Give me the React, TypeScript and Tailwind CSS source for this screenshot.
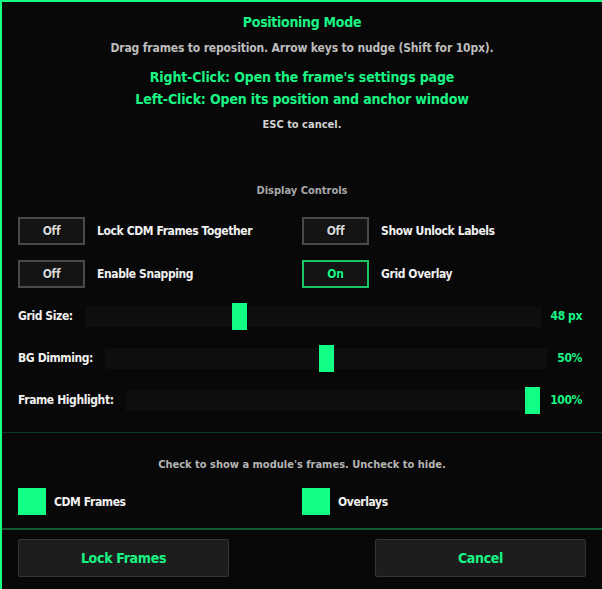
import { FC } from "react";

const green = "text-[#19f584]";

interface ToggleProps {
  label: string;
  on: boolean;
}

const Toggle: FC<ToggleProps> = ({ label, on }) => {
  return (
    <div className="flex items-center gap-[12px]">
      <div
        className={`w-[67px] h-[28px] flex items-center justify-center bg-[#141414] border-2 text-[12px] tracking-[-0.3px] [text-shadow:1px_1px_0_#000] ${
          on ? "border-[#19c865] text-[#19f584]" : "border-[#4a4a4a] text-[#d6d6d6]"
        }`}
      >
        {on ? "On" : "Off"}
      </div>
      <div className="text-[12px] tracking-[-0.4px] text-[#f0f0f0]">{label}</div>
    </div>
  );
};

interface SliderProps {
  label: string;
  value: string;
  pct: number;
}

const Slider: FC<SliderProps> = ({ label, value, pct }) => {
  return (
    <div className="flex items-center h-[28px] pl-[16px] pr-[20px]">
      <div className="text-[12px] tracking-[-0.4px] text-[#f0f0f0] mr-[12px]">{label}</div>
      <div className="relative flex-1 h-[21px] bg-[#0e0e0e]">
        <div
          className="absolute top-[-3px] w-[15px] h-[27px] bg-[#12ff85]"
          style={{ left: `calc(${pct}% - ${(pct / 100) * 15}px)` }}
        />
      </div>
      <div className={`text-[12px] tracking-[-0.4px] ${green} ml-[10px] min-w-[25px] text-right`}>
        {value}
      </div>
    </div>
  );
};

const Check: FC<{ label: string }> = ({ label }) => {
  return (
    <div className="flex items-center gap-[8px]">
      <div className="w-[28px] h-[27px] bg-[#12ff85]" />
      <div className="text-[12px] tracking-[-0.4px] text-[#f0f0f0]">{label}</div>
    </div>
  );
};

const App: FC = () => {
  return (
    <div
      className="w-[602px] h-[589px] overflow-hidden bg-[#080808] border-l-2 border-t-2 border-[#14ff82] font-bold"
      style={{ fontFamily: '"DejaVu Sans Condensed", "DejaVu Sans", sans-serif' }}
    >
      <div className="flex flex-col items-center text-center">
        <div className={`mt-[10px] text-[14px] tracking-[-0.3px] leading-[20px] ${green}`}>
          Positioning Mode
        </div>
        <div className="mt-[8px] text-[12px] tracking-[-0.15px] leading-[16px] text-[#bdbdbd]">
          Drag frames to reposition. Arrow keys to nudge (Shift for 10px).
        </div>
        <div className={`mt-[10px] text-[14px] tracking-[-0.15px] leading-[22px] ${green}`}>
          Right-Click: Open the frame's settings page
        </div>
        <div className={`text-[14px] tracking-[-0.15px] leading-[22px] ${green}`}>
          Left-Click: Open its position and anchor window
        </div>
        <div className="mt-[8px] text-[11px] leading-[14px] text-[#d2d2d2]">ESC to cancel.</div>
        <div className="mt-[51px] text-[11px] leading-[16px] text-[#a8a8a8]">Display Controls</div>
      </div>

      <div className="mt-[18px] grid grid-cols-2 gap-y-[15px] px-[16px]">
        <Toggle label="Lock CDM Frames Together" on={false} />
        <Toggle label="Show Unlock Labels" on={false} />
        <Toggle label="Enable Snapping" on={false} />
        <Toggle label="Grid Overlay" on={true} />
      </div>

      <div className="mt-[14px] flex flex-col gap-[14px]">
        <Slider label="Grid Size:" value="48 px" pct={33.3} />
        <Slider label="BG Dimming:" value="50%" pct={50} />
        <Slider label="Frame Highlight:" value="100%" pct={100} />
      </div>

      <div className="mt-[18px] h-px bg-[#0e3a20]" />

      <div className="mt-[24px] text-center text-[11px] leading-[16px] text-[#b4b4b4]">
        Check to show a module's frames. Uncheck to hide.
      </div>

      <div className="mt-[15px] grid grid-cols-2 px-[16px]">
        <Check label="CDM Frames" />
        <Check label="Overlays" />
      </div>

      <div className="mt-[13px] h-[2px] bg-[#12592f]" />

      <div className="mt-[9px] flex justify-between px-[16px]">
        <button
          className={`w-[211px] h-[38px] bg-[#1d1d1d] border border-[#353535] rounded-[2px] text-[14px] tracking-[-0.3px] ${green}`}
        >
          Lock Frames
        </button>
        <button
          className={`w-[211px] h-[38px] bg-[#1d1d1d] border border-[#353535] rounded-[2px] text-[14px] tracking-[-0.3px] ${green}`}
        >
          Cancel
        </button>
      </div>
    </div>
  );
};

export default App;
